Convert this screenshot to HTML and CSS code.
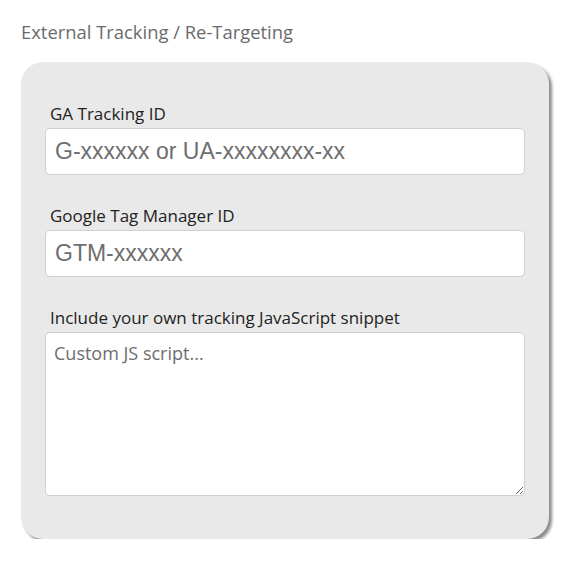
FILE: index.html
```html
<!DOCTYPE html>
<html lang="en">
<head>
    <meta charset="UTF-8">
    <meta name="viewport" content="width=device-width, initial-scale=1.0">
    <title>External Tracking</title>
    <link rel="stylesheet" href="styles.css">
</head>
<body>

<div class="page">
    <h2 class="section-title">External Tracking / Re-Targeting</h2>
    <div class="card">
        <div class="field">
            <label for="ga-id">GA Tracking ID</label>
            <input type="text" id="ga-id" placeholder="G-xxxxxx or UA-xxxxxxxx-xx">
        </div>
        <div class="field">
            <label for="gtm-id">Google Tag Manager ID</label>
            <input type="text" id="gtm-id" placeholder="GTM-xxxxxx">
        </div>
        <div class="field">
            <label for="custom-js">Include your own tracking JavaScript snippet</label>
            <textarea id="custom-js" placeholder="Custom JS script..."></textarea>
        </div>
    </div>
</div>

</body>
</html>
```

FILE: styles.css
```css
body {
    font-family: "Open Sans", sans-serif;
    background-color: #fff;
    margin: 0;
    padding: 0;
}
.page {
    padding: 20px 18px 0 21px;
}
.section-title {
    font-size: 18.4px;
    font-weight: 400;
    line-height: 24px;
    color: #6b6b6b;
    margin: 0 0 18px 0;
}
.card {
    width: 528px;
    box-sizing: border-box;
    background: #e9e9e9;
    border-radius: 22px;
    padding: 41px 24px 43px 24px;
    box-shadow: 3px 3px 3px rgba(0, 0, 0, 0.45);
}
.field {
    display: flex;
    flex-direction: column;
    margin-bottom: 30px;
}
.field:last-child {
    margin-bottom: 0;
}
.field label {
    font-size: 17px;
    line-height: 21px;
    color: #222;
    margin: 0 0 4px 5px;
}
.field input,
.field textarea {
    box-sizing: border-box;
    width: 480px;
    border: 1px solid #cfcfcf;
    border-radius: 5px;
    background: #fff;
    margin: 0;
}
.field input {
    height: 47px;
    padding: 0 9px;
    font-family: "Liberation Sans", Arial, sans-serif;
    font-size: 23px;
    color: #333;
}
.field input::placeholder {
    color: #6e6e6e;
}
.field textarea {
    height: 164px;
    padding: 8px 8px;
    font-family: "Open Sans", sans-serif;
    font-size: 18px;
    line-height: 24px;
    color: #333;
    resize: vertical;
}
.field textarea::placeholder {
    color: #6e6e6e;
}
```
